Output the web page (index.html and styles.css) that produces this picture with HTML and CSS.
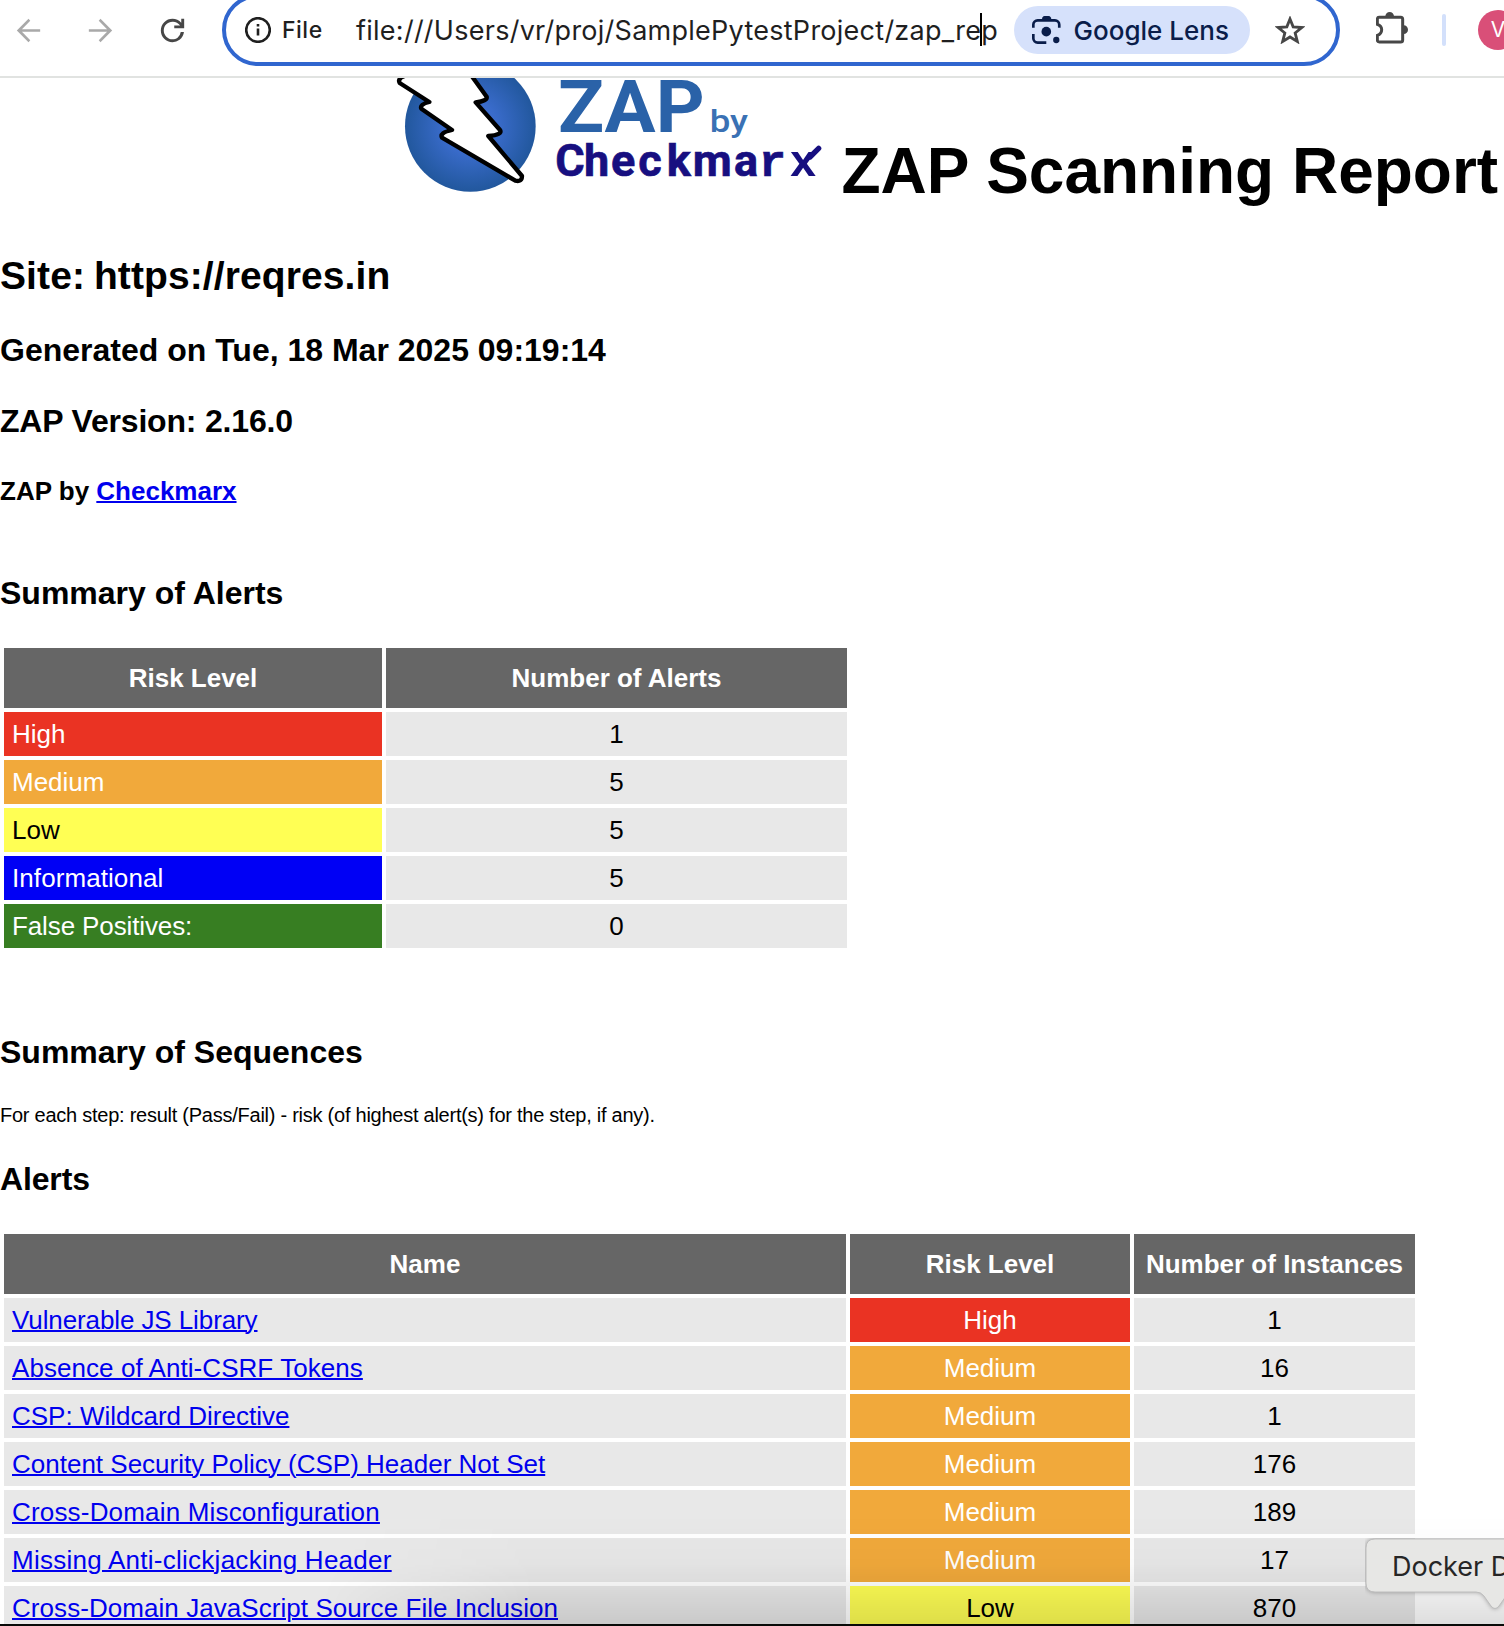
FILE: index.html
```html
<!DOCTYPE html>
<html lang="en">
<head>
<meta charset="utf-8">
<title>ZAP Scanning Report</title>
<link rel="stylesheet" href="styles.css">
</head>
<body>
<div class="window">
  <header class="toolbar">
    <nav class="nav">
      <svg class="nav-icon off" viewBox="0 0 24 24"><path d="M20 11.1H7.5l5.7-5.8L12 4l-8 8 8 8 1.2-1.3-5.7-5.8H20z"/></svg>
      <svg class="nav-icon off" viewBox="0 0 24 24"><path d="M4 11.1h12.5l-5.7-5.8L12 4l8 8-8 8-1.2-1.3 5.7-5.8H4z"/></svg>
      <svg class="nav-icon" viewBox="0 0 24 24"><path d="M12 20c-2.23 0-4.13-.78-5.68-2.32C4.78 16.13 4 14.23 4 12s.78-4.13 2.32-5.68C7.88 4.78 9.77 4 12 4c1.15 0 2.25.24 3.3.71 1.05.48 1.95 1.15 2.7 2.04V4h2v6.400h-6.800V8.500h4a5.83 5.83 0 0 0-2.190-1.900A6 6 0 0 0 12 6c-1.670 0-3.080.58-4.250 1.750S6 10.330 6 12s.58 3.080 1.750 4.250S10.330 18 12 18c1.280 0 2.440-.37 3.480-1.100A5.920 5.920 0 0 0 17.650 13h2.200a7.900 7.900 0 0 1-3.010 5.340A7.800 7.800 0 0 1 12 20z"/></svg>
    </nav>
    <div class="omnibox">
      <svg class="info" viewBox="0 0 26 26"><circle cx="13" cy="13" r="11.800"/><path d="M13 11.600v7M13 7v2.400"/></svg>
      <span class="scheme">File</span>
      <span class="url">file:///Users/vr/proj/SamplePytestProject/zap_re<span class="caret"></span>p</span>
      <span class="lens">
        <svg class="lens-icon" viewBox="0 0 86 84"><path class="frame" d="M4 35V26a13 13 0 0 1 13-13h52a13 13 0 0 1 13 13v9M4 54v13a13 13 0 0 0 13 13h26"/><path d="M28 13l4-9q2-4 6-4h12q4 0 6 4l4 9z"/><circle cx="43" cy="47" r="14.500"/><circle cx="73" cy="72" r="9.500"/></svg>
        <span class="lens-label">Google Lens</span>
      </span>
      <svg class="star" viewBox="0 0 90 86"><path d="M45 9l9.500 23.500 26 2-20 16.500 6.500 25.500-22-13.500-22 13.500 6.500-25.500-20-16.500 26-2z"/></svg>
    </div>
    <svg class="puzzle" viewBox="0 0 96 96"><path class="solid" d="M28 13a13 13 0 0 1 26 0zM83 40a12.500 12.500 0 0 1 0 26z"/><path d="M9 16h65q6 0 6 6v62q0 6-6 6H10q-6 0-6-6V70q13-4 13-16.500T4 37V22q0-6 5-6z"/></svg>
    <span class="divider"></span>
    <span class="avatar">V</span>
  </header>

  <main class="report">
    <h1 class="title">
      <svg class="logo" viewBox="0 24 1380 396">
        <defs><radialGradient id="ball" cx=".5" cy=".5" r=".52"><stop offset="0" stop-color="#4274de"/><stop offset=".4" stop-color="#396bca"/><stop offset="1" stop-color="#20569a"/></radialGradient></defs>
        <circle cx="271" cy="169" r="196" fill="url(#ball)"/>
        <path class="bolt" d="M90 10L63 23Q54 30 59 39L148 96Q118 103 124 116L216 180Q178 188 186 203L406 332Q426 337 426 318L325 198Q369 194 360 180L287 97Q323 93 320 80L262 0z"/>
        <text class="zap" x="534" y="187" textLength="440" lengthAdjust="spacingAndGlyphs">ZAP</text>
        <text class="by" x="989" y="187" textLength="115" lengthAdjust="spacingAndGlyphs">by</text>
        <text class="checkmarx" x="526 612 693 775 860 938 1062" y="318">Checkma<tspan class="slab" x="1137">r</tspan></text>
        <text class="cross" x="1229" y="318" textLength="80" lengthAdjust="spacingAndGlyphs">x</text>
        <path class="arm" d="M1290 261L1316 235"/>
      </svg>
      <span class="title-text">ZAP Scanning Report</span>
    </h1>
    <h2 class="site">Site: https://reqres.in</h2>
    <h3 class="generated">Generated on Tue, 18 Mar 2025 09:19:14</h3>
    <h3 class="version">ZAP Version: 2.16.0</h3>
    <h4 class="vendor">ZAP by <a href="#">Checkmarx</a></h4>

    <h3 class="summary-heading">Summary of Alerts</h3>
    <table class="summary">
      <colgroup><col class="c-level"><col class="c-count"></colgroup>
      <tr><th>Risk Level</th><th>Number of Alerts</th></tr>
      <tr><td class="high">High</td><td class="num">1</td></tr>
      <tr><td class="medium">Medium</td><td class="num">5</td></tr>
      <tr><td class="low">Low</td><td class="num">5</td></tr>
      <tr><td class="informational">Informational</td><td class="num">5</td></tr>
      <tr><td class="false-positive">False Positives:</td><td class="num">0</td></tr>
    </table>

    <h3 class="sequences-heading">Summary of Sequences</h3>
    <p class="note">For each step: result (Pass/Fail) - risk (of highest alert(s) for the step, if any).</p>

    <h3 class="alerts-heading">Alerts</h3>
    <table class="alerts">
      <colgroup><col class="c-name"><col class="c-risk"><col class="c-instances"></colgroup>
      <tr><th>Name</th><th>Risk Level</th><th>Number of Instances</th></tr>
      <tr><td><a class="tight" href="#">Vulnerable JS Library</a></td><td class="num high">High</td><td class="num">1</td></tr>
      <tr><td><a class="open" href="#">Absence of Anti-CSRF Tokens</a></td><td class="num medium">Medium</td><td class="num">16</td></tr>
      <tr><td><a href="#">CSP: Wildcard Directive</a></td><td class="num medium">Medium</td><td class="num">1</td></tr>
      <tr><td><a href="#">Content Security Policy (CSP) Header Not Set</a></td><td class="num medium">Medium</td><td class="num">176</td></tr>
      <tr><td><a class="wide" href="#">Cross-Domain Misconfiguration</a></td><td class="num medium">Medium</td><td class="num">189</td></tr>
      <tr><td><a class="wider" href="#">Missing Anti-clickjacking Header</a></td><td class="num medium">Medium</td><td class="num">17</td></tr>
      <tr><td><a class="open" href="#">Cross-Domain JavaScript Source File Inclusion</a></td><td class="num low">Low</td><td class="num">870</td></tr>
    </table>
    <div class="dock-shadow"></div>
  </main>
  <div class="dock-edge"></div>

  <div class="tooltip">
    <svg class="bubble" viewBox="0 0 150 80"><path d="M150 1H10Q1 1 1 10V45Q1 54 10 54H111Q116 54 119 58L126 68Q130 73 134 68L141 58Q144 54 149 54H150z"/></svg>
    <span class="tooltip-text">Docker D</span>
  </div>
</div>
</body>
</html>
```
FILE: styles.css
```css
* { box-sizing: border-box; }

body {
  margin: 0;
  background: #fff;
  color: #000;
  font-family: "Liberation Sans", Arial, sans-serif;
}

.window {
  position: relative;
  display: flex;
  flex-direction: column;
  width: 1504px;
  height: 1626px;
  overflow: hidden;
}

/* Browser toolbar */
.toolbar {
  display: flex;
  align-items: center;
  flex: none;
  height: 78px;
  padding: 0 0 16px 11px;
  border-bottom: 2px solid #e1e3e1;
  overflow: hidden;
  font-family: Inter, sans-serif;
  color: #1f1f1f;
}

.nav { display: flex; gap: 37px; width: 211px; flex: none; }
.nav-icon { width: 35px; height: 35px; fill: #474747; }
.nav-icon.off { fill: #a9a9a9; }

.omnibox {
  display: flex;
  align-items: center;
  flex: none;
  width: 1118px;
  height: 72px;
  padding-left: 19px;
  border: 4px solid #3066cf;
  border-radius: 36px;
}

.info { width: 26px; height: 26px; fill: none; stroke: #1f1f1f; stroke-width: 2.6; }
.scheme { width: 74px; margin-left: 11px; font-size: 23px; font-weight: 500; letter-spacing: .5px; }
.url { width: 658px; font-size: 27px; letter-spacing: .26px; white-space: nowrap; }
.caret {
  display: inline-block;
  width: 2px;
  height: 33px;
  margin: 0 -1px;
  vertical-align: -6px;
  background: #000;
}

.lens {
  display: flex;
  align-items: center;
  width: 236px;
  height: 48px;
  padding-left: 18px;
  border-radius: 24px;
  background: #d6e1fb;
  color: #0a1d4a;
}
.lens-icon { width: 28.600px; height: 28px; fill: #0a1d4a; }
.lens-icon .frame { fill: none; stroke: #0a1d4a; stroke-width: 8; }
.lens-label { margin-left: 13px; font-size: 26px; font-weight: 500; white-space: nowrap; }

.star { width: 30px; height: 28.600px; margin-left: 25px; fill: none; stroke: #474747; stroke-width: 8.500; }

.puzzle { width: 32px; height: 32px; margin: 0 0 4px 36px; fill: none; stroke: #474747; stroke-width: 9; flex: none; }
.puzzle .solid { fill: #474747; stroke: none; }
.divider { width: 4px; height: 32px; margin-left: 34px; border-radius: 2px; background: #d3e0fb; flex: none; }
.avatar {
  width: 40px;
  height: 40px;
  margin-left: 32px;
  border-radius: 50%;
  background: #d94f78;
  color: #fff;
  font-size: 21px;
  line-height: 40px;
  text-align: center;
  flex: none;
}

/* Report */
.report { position: relative; flex: 1; min-height: 0; overflow: hidden; }
h1, h2, h3, h4, p { margin: 0; white-space: nowrap; }
h3 { font-size: 32px; line-height: 36px; }
a { color: #0000ee; text-decoration-thickness: 2px; }

.title { display: flex; height: 160px; padding-left: 380px; }
.logo { width: 460px; height: 132px; flex: none; }
.bolt { fill: #fff; stroke: #000; stroke-width: 13; stroke-linejoin: round; }
.zap { font: 700 216px Roboto, sans-serif; fill: #2a62a8; }
.by { font: 500 94px Roboto, sans-serif; fill: #3a71b4; }
.checkmarx { font: 700 135px Roboto, sans-serif; fill: #170f80; stroke: #170f80; stroke-width: 2; }
.slab { font-family: "Liberation Mono", monospace; }
.cross { font: 500 135px Roboto, sans-serif; fill: #170f80; }
.arm { fill: none; stroke: #170f80; stroke-width: 16; stroke-linecap: round; }
.title-text { margin: 56px 0 0 1.5px; font-size: 64px; line-height: 74px; }

.site { margin-top: 16px; font-size: 39px; line-height: 44px; letter-spacing: .1px; word-spacing: -2px; }
.generated { margin-top: 34px; }
.version { margin-top: 35px; letter-spacing: -.19px; }
.vendor { margin-top: 37px; font-size: 26px; line-height: 30px; }
.summary-heading { margin: 69px 0 33px; }
.sequences-heading { margin-top: 82px; }
.note { margin-top: 33px; font-size: 20px; line-height: 24px; letter-spacing: -.25px; }
.alerts-heading { margin: 34px 0 33px; letter-spacing: -.15px; }

table { table-layout: fixed; border-spacing: 4px; font-size: 26px; }
.summary { width: 851px; }
.alerts { width: 1419px; }
.c-level { width: 378px; }
.c-count { width: 461px; }
.c-name { width: 842px; }
.c-risk { width: 280px; }
.c-instances { width: 281px; }
th { height: 60px; padding: 0; background: #666; color: #fff; line-height: 60px; white-space: nowrap; }
td { height: 44px; padding: 0 8px; background: #e8e8e8; line-height: 44px; white-space: nowrap; }
.num { text-align: center; }
.high { background: #ea3323; color: #fff; }
.medium { background: #f1a93b; color: #fff; }
.low { background: #ffff54; }
.informational { background: #0000f5; color: #fff; letter-spacing: .08px; }
.false-positive { background: #377e22; color: #fff; letter-spacing: -.12px; }
.tight { letter-spacing: -.1px; }
.open { letter-spacing: .06px; }
.wide { letter-spacing: .18px; }
.wider { letter-spacing: .26px; }

/* Dock overlapping the bottom of the page */
.dock-shadow {
  position: absolute;
  inset: auto 0 0 0;
  height: 110px;
  background: linear-gradient(rgba(0,0,0,0), rgba(0,0,0,.02) 45%, rgba(0,0,0,.06) 66%, rgba(0,0,0,.13));
  -webkit-mask-image: linear-gradient(100deg, transparent 22%, #000 36%);
  mask-image: linear-gradient(100deg, transparent 22%, #000 36%);
}
.dock-edge { flex: none; height: 2px; background: #080a08; }

.tooltip {
  position: absolute;
  left: 1365px;
  top: 1538px;
  width: 139px;
  height: 80px;
  overflow: hidden;
  padding: 12px 0 0 27px;
  font: 27px/34px Inter, sans-serif;
  color: #262626;
  white-space: nowrap;
}
.bubble {
  position: absolute;
  left: 0;
  top: 0;
  width: 150px;
  height: 80px;
  fill: #e7e7e5;
  stroke: #bdbdbd;
  stroke-width: 1;
  filter: drop-shadow(0 0 2px rgba(0,0,0,.3));
}
.tooltip-text { position: relative; }
```
